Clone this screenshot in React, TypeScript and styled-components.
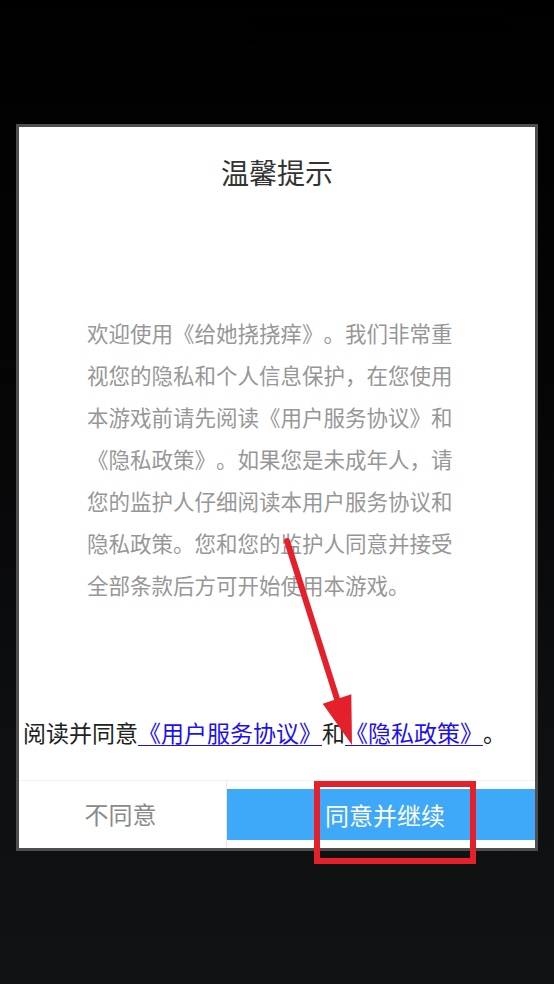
import React from "react";
import styled, { createGlobalStyle } from "styled-components";

const Global = createGlobalStyle`
  html, body {
    margin: 0;
    padding: 0;
    background: #000;
  }
  * {
    box-sizing: border-box;
    text-spacing-trim: space-all;
  }
`;

const Page = styled.div`
  position: relative;
  width: 554px;
  height: 984px;
  overflow: hidden;
  padding: 124px 16px 0 16px;
  background: linear-gradient(to bottom, #000 0%, #050506 40%, #0e0f11 75%, #111214 100%);
  font-family: "Noto Sans CJK SC", "Noto Sans", sans-serif;
`;

const Card = styled.div`
  width: 522px;
  height: 727px;
  border: 3px solid #4e4e4e;
  box-shadow: inset 0 0 0 1px #2a2a2a;
  display: flex;
  flex-direction: column;
`;

const Inner = styled.div`
  flex: 1;
  background: #fff;
  display: flex;
  flex-direction: column;
`;

const Title = styled.div`
  padding-top: 27px;
  height: 63px;
  line-height: 36px;
  font-size: 28px;
  color: #333;
  text-align: center;
`;

const Body = styled.p`
  margin: 122px 0 0 0;
  padding: 0 68px;
  height: 294px;
  font-size: 21.5px;
  line-height: 42px;
  color: #979797;
  word-break: break-all;
`;

const Agree = styled.div`
  margin-top: 110px;
  padding-left: 4px;
  height: 32px;
  font-size: 23px;
  line-height: 32px;
  color: #222;
  white-space: nowrap;
`;

const Link = styled.a`
  color: #1d10f0;
  text-decoration: underline;
  text-underline-offset: 3px;
  text-decoration-thickness: 1px;
`;

const Buttons = styled.div`
  margin-top: 32px;
  height: 68px;
  border-top: 1px solid #f1f1f1;
  display: flex;
`;

const Disagree = styled.div`
  width: 208px;
  border-right: 1px solid #f3e6e6;
  display: flex;
  align-items: center;
  justify-content: center;
  font-size: 24px;
  color: #8a8a8a;
  padding: 0 4px 2px 0;
`;

const AgreeArea = styled.div`
  flex: 1;
  padding: 8px 0 8px 0;
  display: flex;
`;

const AgreeButton = styled.div`
  flex: 1;
  background: #3ea8f9;
  color: #fff;
  font-size: 24px;
  display: flex;
  align-items: center;
  justify-content: center;
  padding-left: 8px;
`;

const Overlay = styled.svg`
  position: absolute;
  left: 0;
  top: 0;
  pointer-events: none;
`;

export default function App() {
  return (
    <Page>
      <Global />
      <Card>
        <Inner>
          <Title>温馨提示</Title>
          <Body>
            欢迎使用《给她挠挠痒》。我们非常重视您的隐私和个人信息保护，在您使用本游戏前请先阅读《用户服务协议》和《隐私政策》。如果您是未成年人，请您的监护人仔细阅读本用户服务协议和隐私政策。您和您的监护人同意并接受全部条款后方可开始使用本游戏。
          </Body>
          <Agree>
            阅读并同意<Link>《用户服务协议》</Link>和<Link>《隐私政策》</Link>。
          </Agree>
          <Buttons>
            <Disagree>不同意</Disagree>
            <AgreeArea>
              <AgreeButton>同意并继续</AgreeButton>
            </AgreeArea>
          </Buttons>
        </Inner>
      </Card>
      <Overlay width="554" height="984" viewBox="0 0 554 984">
        <line x1="287" y1="541" x2="338" y2="702" stroke="#e4212b" strokeWidth="6" strokeLinecap="round" />
        <polygon points="352,745 322.7,703.7 351.3,694.3" fill="#e4212b" />
        <rect x="317" y="784" width="156" height="77" fill="none" stroke="#e4212b" strokeWidth="6" />
      </Overlay>
    </Page>
  );
}
